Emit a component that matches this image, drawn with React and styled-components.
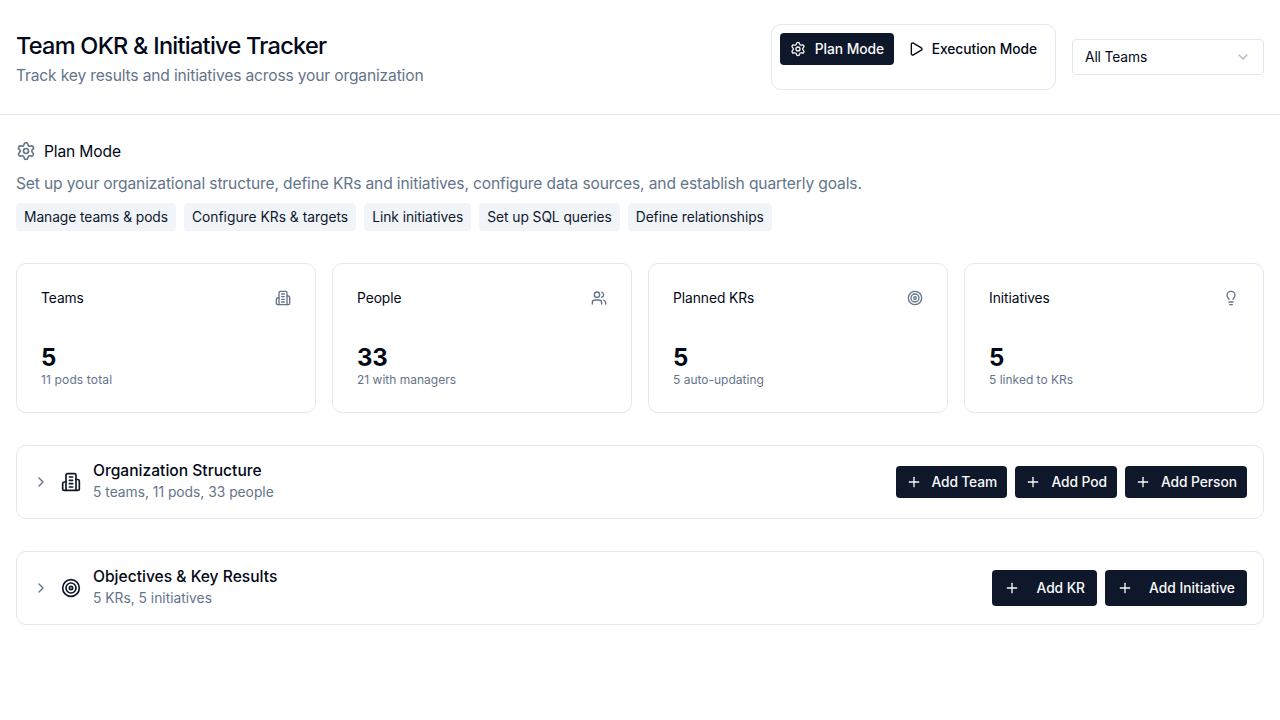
import React from "react";
import styled, { createGlobalStyle } from "styled-components";
import { Settings, Play, Target, Lightbulb, Plus, ChevronRight, ChevronDown } from "lucide-react";

const GlobalStyle = createGlobalStyle`
  *, *::before, *::after { box-sizing: border-box; }
  body { margin: 0; background: #fff; color: #020817; font: 400 16px/24px Inter, sans-serif; }
  h1, h2, h3, p { margin: 0; font-weight: 400; }
  button { font-family: inherit; cursor: pointer; }
  svg { display: block; flex-shrink: 0; }
`;

const Header = styled.header`
  display: flex;
  align-items: center;
  justify-content: space-between;
  height: 115px;
  padding: 0 16px;
  border-bottom: 1px solid #e2e8f0;
`;
const PageTitle = styled.h1`
  padding-top: 2px;
  font-size: 23.5px;
  line-height: 34px;
  font-weight: 500;
  letter-spacing: -0.73px;
`;
const Lead = styled.p`
  padding-top: 2px;
  color: #64748b;
  font-size: 15.6px;
  line-height: 22px;
  letter-spacing: ${(p) => p.$track}px;
`;
const Note = styled.p`
  color: #64748b;
  font-size: ${(p) => (p.$small ? 12 : 13.8)}px;
  line-height: ${(p) => (p.$small ? 16 : 20)}px;
  letter-spacing: ${(p) => p.$track || 0}px;
`;
const HeaderTools = styled.div`
  display: flex;
  align-items: center;
  gap: 16px;
`;
const ModeSwitch = styled.div`
  display: flex;
  align-items: flex-start;
  gap: 4px;
  height: 66px;
  padding: 8px;
  border: 1px solid #e2e8f0;
  border-radius: 10px;
`;
const Button = styled.button`
  display: inline-flex;
  align-items: center;
  justify-content: space-between;
  width: ${(p) => p.$width}px;
  height: ${(p) => (p.$large ? 36 : 32)}px;
  padding: 0 ${(p) => (p.$large ? 12 : 10)}px;
  border: 0;
  border-radius: 4px;
  background: ${(p) => (p.$plain ? "transparent" : "#0f172a")};
  color: ${(p) => (p.$plain ? "#020817" : "#f8fafc")};
  font-size: 13.8px;
  line-height: 20px;
  font-weight: 500;
  letter-spacing: ${(p) => p.$track ?? -0.06}px;
  white-space: nowrap;
`;
const TeamSelect = styled.button`
  display: flex;
  align-items: center;
  justify-content: space-between;
  width: 192px;
  height: 36px;
  padding: 0 12px;
  border: 1px solid #e2e8f0;
  border-radius: 4px;
  background: #fff;
  color: #020817;
  font-size: 13.8px;
  line-height: 20px;
  letter-spacing: -0.12px;
  span { padding-bottom: 1px; }
  svg { color: #64748b; opacity: 0.5; }
`;

const Main = styled.main`
  display: flex;
  flex-direction: column;
  gap: 32px;
  padding: 24px 16px;
`;
const Intro = styled.section`
  display: flex;
  flex-direction: column;
  gap: 8px;
`;
const IntroTitle = styled.h2`
  display: flex;
  align-items: center;
  gap: 8px;
  height: 24px;
  font-size: 15.6px;
  letter-spacing: -0.15px;
  svg { color: #64748b; }
  span { padding-top: 2px; line-height: 22px; }
`;
const Tags = styled.div`
  display: flex;
  gap: 8px;
`;
const Tag = styled.span`
  padding: 4px 8px;
  border-radius: 4px;
  background: #f1f5f9;
  color: #0f172a;
  font-size: 13.8px;
  line-height: 20px;
  letter-spacing: ${(p) => p.$track}px;
`;

const Stats = styled.section`
  display: grid;
  grid-template-columns: repeat(4, 1fr);
  gap: 16px;
`;
const StatCard = styled.article`
  padding: 24px;
  border: 1px solid #e2e8f0;
  border-radius: 10px;
`;
const StatHead = styled.div`
  display: flex;
  align-items: center;
  justify-content: space-between;
  margin-bottom: 32px;
  font-size: 13.8px;
  line-height: 20px;
  letter-spacing: -0.06px;
  svg { color: #64748b; }
`;
const StatValue = styled.div`
  padding-top: 4px;
  font-size: 24px;
  line-height: 28px;
  font-weight: 700;
  letter-spacing: -0.2px;
`;

const Panel = styled.section`
  display: flex;
  align-items: center;
  gap: 12px;
  height: 74px;
  padding: 0 16px;
  border: 1px solid #e2e8f0;
  border-radius: 10px;
  > svg { color: #0f172a; }
  > svg:first-child { color: #64748b; }
`;
const PanelText = styled.div`
  flex: 1;
  padding-bottom: 4px;
`;
const PanelTitle = styled.h3`
  padding-top: 2px;
  font-size: 15.6px;
  line-height: 22px;
  font-weight: 500;
`;
const Actions = styled.div`
  display: flex;
  gap: 8px;
`;

function Icon({ size, children }) {
  return (
    <svg width={size} height={size} viewBox="0 0 24 24" fill="none" stroke="currentColor"
      strokeWidth="2" strokeLinecap="round" strokeLinejoin="round">
      {children}
    </svg>
  );
}
const Building = ({ size }) => (
  <Icon size={size}>
    <path d="M6 22V4a2 2 0 0 1 2-2h8a2 2 0 0 1 2 2v18Z" />
    <path d="M6 12H4a2 2 0 0 0-2 2v6a2 2 0 0 0 2 2h2" />
    <path d="M18 9h2a2 2 0 0 1 2 2v9a2 2 0 0 1-2 2h-2" />
    <path d="M10 6h4M10 10h4M10 14h4M10 18h4" />
  </Icon>
);
const People = ({ size }) => (
  <Icon size={size}>
    <path d="M16 21v-2a4 4 0 0 0-4-4H6a4 4 0 0 0-4 4v2" />
    <circle cx="9" cy="7" r="4" />
    <path d="M22 21v-2a4 4 0 0 0-3-3.87" />
    <path d="M16 3.13a4 4 0 0 1 0 7.75" />
  </Icon>
);

const tags = [
  ["Manage teams & pods", -0.07],
  ["Configure KRs & targets", 0.01],
  ["Link initiatives", -0.05],
  ["Set up SQL queries", -0.06],
  ["Define relationships", -0.07],
];
const stats = [
  { label: "Teams", value: 5, note: "11 pods total", track: 0.14, icon: Building },
  { label: "People", value: 33, note: "21 with managers", icon: People },
  { label: "Planned KRs", value: 5, note: "5 auto-updating", icon: Target },
  { label: "Initiatives", value: 5, note: "5 linked to KRs", icon: Lightbulb },
];
const panels = [
  {
    title: "Organization Structure", note: "5 teams, 11 pods, 33 people", icon: Building,
    actions: [["Add Team", 111, -0.15], ["Add Pod", 102], ["Add Person", 122]],
  },
  {
    title: "Objectives & Key Results", note: "5 KRs, 5 initiatives", icon: Target, large: true,
    actions: [["Add KR", 105], ["Add Initiative", 142, 0.01]],
  },
];

export default function App() {
  return (
    <>
      <GlobalStyle />
      <Header>
        <div>
          <PageTitle>Team OKR &amp; Initiative Tracker</PageTitle>
          <Lead $track={-0.16}>Track key results and initiatives across your organization</Lead>
        </div>
        <HeaderTools>
          <ModeSwitch>
            <Button $width={114}><Settings size={16} />Plan Mode</Button>
            <Button $width={149} $plain><Play size={16} />Execution Mode</Button>
          </ModeSwitch>
          <TeamSelect><span>All Teams</span><ChevronDown size={16} /></TeamSelect>
        </HeaderTools>
      </Header>
      <Main>
        <Intro>
          <IntroTitle><Settings size={20} /><span>Plan Mode</span></IntroTitle>
          <Lead $track={-0.138}>Set up your organizational structure, define KRs and initiatives, configure data sources, and establish quarterly goals.</Lead>
          <Tags>{tags.map(([label, track]) => <Tag key={label} $track={track}>{label}</Tag>)}</Tags>
        </Intro>
        <Stats>
          {stats.map(({ label, value, note, track, icon: I }) => (
            <StatCard key={label}>
              <StatHead>{label}<I size={16} /></StatHead>
              <StatValue>{value}</StatValue>
              <Note $small $track={track}>{note}</Note>
            </StatCard>
          ))}
        </Stats>
        {panels.map(({ title, note, icon: I, large, actions }) => (
          <Panel key={title}>
            <ChevronRight size={16} />
            <I size={20} />
            <PanelText>
              <PanelTitle>{title}</PanelTitle>
              <Note>{note}</Note>
            </PanelText>
            <Actions>
              {actions.map(([label, width, track]) => (
                <Button key={label} $large={large} $width={width} $track={track}><Plus size={16} />{label}</Button>
              ))}
            </Actions>
          </Panel>
        ))}
      </Main>
    </>
  );
}
